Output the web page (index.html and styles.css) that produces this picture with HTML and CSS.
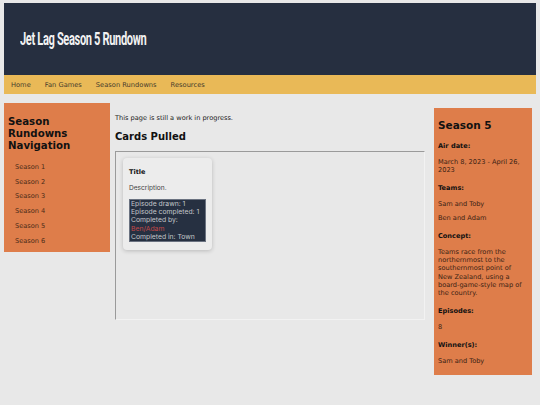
FILE: index.html
```html
<!DOCTYPE html>
<html lang="en">
<head>
<meta charset="UTF-8">
<meta name="viewport" content="width=device-width, initial-scale=1.0">
<title>Jet Lag Season 5 Rundown</title>
<link rel="stylesheet" href="styles.css">
</head>
<body>
  <header class="site-header">
    <h1 class="site-title">Jet Lag Season 5 Rundown</h1>
  </header>
  <nav class="top-nav">
    <a href="#">Home</a>
    <a href="#">Fan Games</a>
    <a href="#">Season Rundowns</a>
    <a href="#">Resources</a>
  </nav>

  <div class="page">
    <aside class="side-nav">
      <h2>Season Rundowns Navigation</h2>
      <ul>
        <li><a href="#">Season 1</a></li>
        <li><a href="#">Season 2</a></li>
        <li><a href="#">Season 3</a></li>
        <li><a href="#">Season 4</a></li>
        <li><a href="#">Season 5</a></li>
        <li><a href="#">Season 6</a></li>
      </ul>
    </aside>

    <main class="content">
      <p class="note">This page is still a work in progress.</p>
      <h2>Cards Pulled</h2>
      <div class="card-box">
        <div class="card">
          <h3>Title</h3>
          <p class="card-desc">Description.</p>
          <div class="card-stats">
            Episode drawn: 1<br>
            Episode completed: 1<br>
            Completed by:<br>
            <span class="team">Ben/Adam</span><br>
            Completed in: Town
          </div>
        </div>
      </div>
    </main>

    <aside class="season-info">
      <h2>Season 5</h2>
      <h4>Air date:</h4>
      <p>March 8, 2023 - April 26, 2023</p>
      <h4>Teams:</h4>
      <p>Sam and Toby</p>
      <p>Ben and Adam</p>
      <h4>Concept:</h4>
      <p>Teams race from the northernmost to the southernmost point of New Zealand, using a board-game-style map of the country.</p>
      <h4>Episodes:</h4>
      <p>8</p>
      <h4>Winner(s):</h4>
      <p>Sam and Toby</p>
    </aside>
  </div>
</body>
</html>
```

FILE: styles.css
```css
body {
  margin: 3px 4px;
  background-color: #e8e8e8;
  font-family: "DejaVu Sans", Verdana, sans-serif;
  font-size: 6.6px;
  color: #222;
}
.site-header {
  background-color: #262f40;
  height: 72px;
  display: flex;
  align-items: center;
  padding-left: 16px;
}
.site-title {
  margin: 0;
  color: #f2f2f2;
  font-family: Roboto, sans-serif;
  font-weight: 700;
  font-size: 18.5px;
  letter-spacing: -0.6px;
  transform: scaleX(0.6);
  transform-origin: left center;
  white-space: nowrap;
}
.top-nav {
  background-color: #e9b957;
  height: 19px;
  display: flex;
  align-items: center;
  font-size: 6.7px;
}
.top-nav a {
  color: #463c2c;
  text-decoration: none;
  padding: 0 7px;
}
.page {
  display: grid;
  grid-template-columns: 106px 1fr 98px;
  column-gap: 5px;
  align-items: start;
  margin-top: 9px;
  padding-right: 4px;
}
.side-nav {
  background-color: #de7d4a;
  padding: 13px 4px 4px 4px;
}
.side-nav h2 {
  margin: 0;
  font-size: 10.2px;
  line-height: 12px;
  color: #111;
}
.side-nav ul {
  list-style: none;
  margin: 8px 0 0;
  padding: 0 0 0 7px;
}
.side-nav li {
  line-height: 14.7px;
}
.side-nav a {
  color: #4a2c18;
  text-decoration: none;
}
.content {
  padding: 11px 4px 0 0;
}
.note {
  margin: 0;
  line-height: 8px;
}
.content h2 {
  margin: 9px 0 8px;
  font-size: 10px;
  line-height: 12px;
  color: #111;
}
.card-box {
  height: 161px;
  padding: 6px 7px 0;
  border: 1px solid;
  border-color: #9a9a9a #f2f2f2 #f2f2f2 #9a9a9a;
}
.card {
  width: 77px;
  padding: 10px 6px 8px;
  border-radius: 4px;
  background-color: #ececec;
  box-shadow: 0 1px 4px rgba(0, 0, 0, 0.2);
}
.card h3 {
  margin: 0;
  font-size: 6.5px;
  line-height: 8px;
  color: #111;
}
.card-desc {
  margin: 8px 0 7px;
  font-family: Inter, sans-serif;
  line-height: 8px;
  color: #444;
}
.card-stats {
  background-color: #263041;
  border: 1px solid #6a7280;
  padding: 0 1px;
  font-family: Inter, sans-serif;
  font-size: 6.8px;
  line-height: 8.2px;
  color: #c4c6ca;
  white-space: nowrap;
}
.team {
  color: #c04848;
}
.season-info {
  background-color: #de7d4a;
  margin-top: 5px;
  padding: 11px 7px 4px 4px;
  color: #3a2214;
}
.season-info h2 {
  margin: 0;
  font-size: 10.5px;
  line-height: 13px;
  color: #111;
}
.season-info h4 {
  margin: 9.5px 0 8px;
  font-size: 6.6px;
  line-height: 8px;
  color: #111;
}
.season-info p {
  margin: 6px 0;
  line-height: 8.3px;
}
```
